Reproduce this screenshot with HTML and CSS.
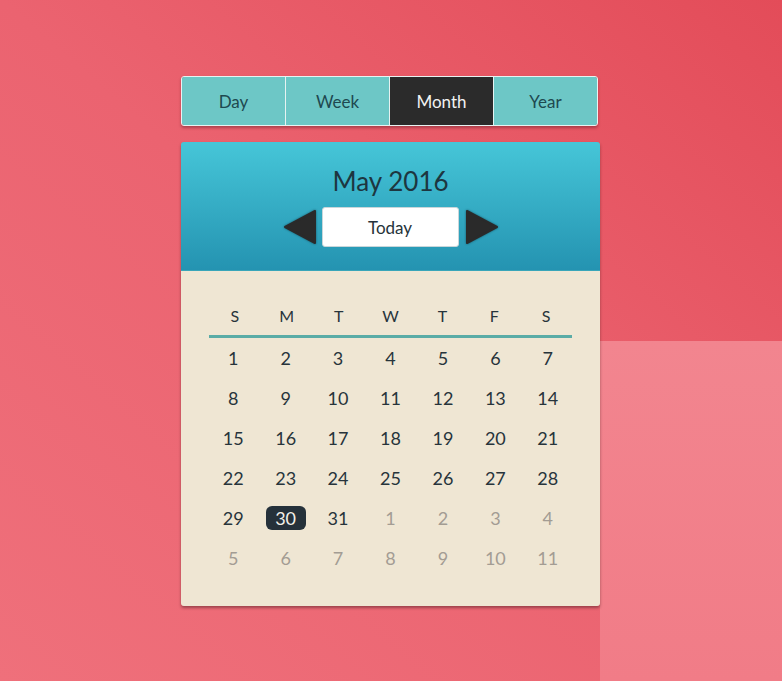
FILE: index.html
```html
<!DOCTYPE html>
<html lang="en">
<head>
<meta charset="utf-8">
<title>Calendar</title>
<link rel="stylesheet" href="styles.css">
</head>
<body>
<div class="wrap">
  <nav class="tabs">
    <button class="tab">Day</button>
    <button class="tab">Week</button>
    <button class="tab active">Month</button>
    <button class="tab">Year</button>
  </nav>
  <section class="card">
    <header class="card-head">
      <h1 class="title">May 2016</h1>
      <div class="nav">
        <button class="arrow arrow-prev" aria-label="Previous">
          <svg width="34" height="38" viewBox="0 0 34 38"><polygon points="2,19 32,3 32,35" /></svg>
        </button>
        <button class="today">Today</button>
        <button class="arrow arrow-next" aria-label="Next">
          <svg width="34" height="38" viewBox="0 0 34 38"><polygon points="2,3 32,19 2,35" /></svg>
        </button>
      </div>
    </header>
    <div class="card-body">
      <div class="weekdays">
        <span>S</span><span>M</span><span>T</span><span>W</span><span>T</span><span>F</span><span>S</span>
      </div>
      <div class="days">
        <span>1</span><span>2</span><span>3</span><span>4</span><span>5</span><span>6</span><span>7</span>
        <span>8</span><span>9</span><span>10</span><span>11</span><span>12</span><span>13</span><span>14</span>
        <span>15</span><span>16</span><span>17</span><span>18</span><span>19</span><span>20</span><span>21</span>
        <span>22</span><span>23</span><span>24</span><span>25</span><span>26</span><span>27</span><span>28</span>
        <span>29</span><span><b class="selected">30</b></span><span>31</span><span class="muted">1</span><span class="muted">2</span><span class="muted">3</span><span class="muted">4</span>
        <span class="muted">5</span><span class="muted">6</span><span class="muted">7</span><span class="muted">8</span><span class="muted">9</span><span class="muted">10</span><span class="muted">11</span>
      </div>
    </div>
  </section>
</div>
</body>
</html>
```

FILE: styles.css
```css
* { box-sizing: border-box; }

html, body { margin: 0; padding: 0; }

body {
  min-height: 681px;
  padding-right: 1px;
  font-family: "Lato", "Open Sans", sans-serif;
  background:
    linear-gradient(to bottom, #f2858f, #f17c87) 600px 341px / 182px 340px no-repeat,
    linear-gradient(to bottom left, #e34c59 0%, #eb6370 50%, #ef707b 100%);
}

.wrap {
  width: 419px;
  margin: 0 auto;
  padding-top: 76px;
}

.tabs {
  display: flex;
  width: 417px;
  height: 50px;
  border: 1px solid #e9f3f2;
  border-radius: 3px;
  overflow: hidden;
  box-shadow: 0 2px 3px rgba(80, 20, 30, 0.4);
}

.tab {
  flex: 1;
  border: 0;
  margin: 0;
  padding: 0;
  background: #6dc7c6;
  color: #1e4950;
  font-family: inherit;
  font-size: 17px;
  cursor: pointer;
}

.tab + .tab { border-left: 1px solid #e6f2f1; }

.tab.active {
  background: #2b2b2b;
  color: #f2f2f2;
}

.card {
  margin-top: 16px;
  border-radius: 3px;
  overflow: hidden;
  box-shadow: 0 2px 3px rgba(60, 20, 25, 0.45);
}

.card-head {
  height: 129px;
  padding-top: 22px;
  background: linear-gradient(to bottom, #46c6d8, #2493b1);
  border-bottom: 1px solid rgba(20, 70, 90, 0.25);
  text-align: center;
}

.title {
  margin: 0;
  font-size: 26px;
  font-weight: 400;
  line-height: 34px;
  color: #1d3640;
}

.nav {
  display: flex;
  justify-content: center;
  align-items: center;
  margin-top: 9px;
  height: 40px;
}

.arrow {
  border: 0;
  padding: 0;
  background: none;
  width: 34px;
  height: 38px;
  cursor: pointer;
}

.arrow svg { display: block; filter: drop-shadow(0 0 1px rgba(10, 40, 50, 0.6)); }

.arrow polygon {
  fill: #2a2a2a;
  stroke: #2a2a2a;
  stroke-width: 2;
  stroke-linejoin: round;
}

.arrow-prev { margin-right: 5px; }
.arrow-next { margin-left: 6px; }

.today {
  width: 137px;
  height: 40px;
  border: 1px solid #c9d6da;
  border-radius: 3px;
  background: #fff;
  font-family: inherit;
  font-size: 17px;
  color: #26333a;
  cursor: pointer;
}

.card-body {
  background: #efe6d3;
  padding: 26px 26px 28px;
}

.weekdays,
.days {
  display: grid;
  grid-template-columns: repeat(7, 1fr);
  text-align: center;
}

.weekdays {
  height: 41px;
  line-height: 38px;
  font-size: 16px;
  color: #27343b;
  border-bottom: 3px solid #5aaca6;
  margin: 0 2px;
}

.days span {
  height: 40px;
  line-height: 40px;
  font-size: 18px;
  color: #27343b;
}

.days .muted { color: #a39c93; }

.selected {
  display: inline-block;
  width: 40px;
  height: 24px;
  line-height: 24px;
  border-radius: 6px;
  background: #25313a;
  color: #f2efe8;
  font-weight: 400;
}
```
